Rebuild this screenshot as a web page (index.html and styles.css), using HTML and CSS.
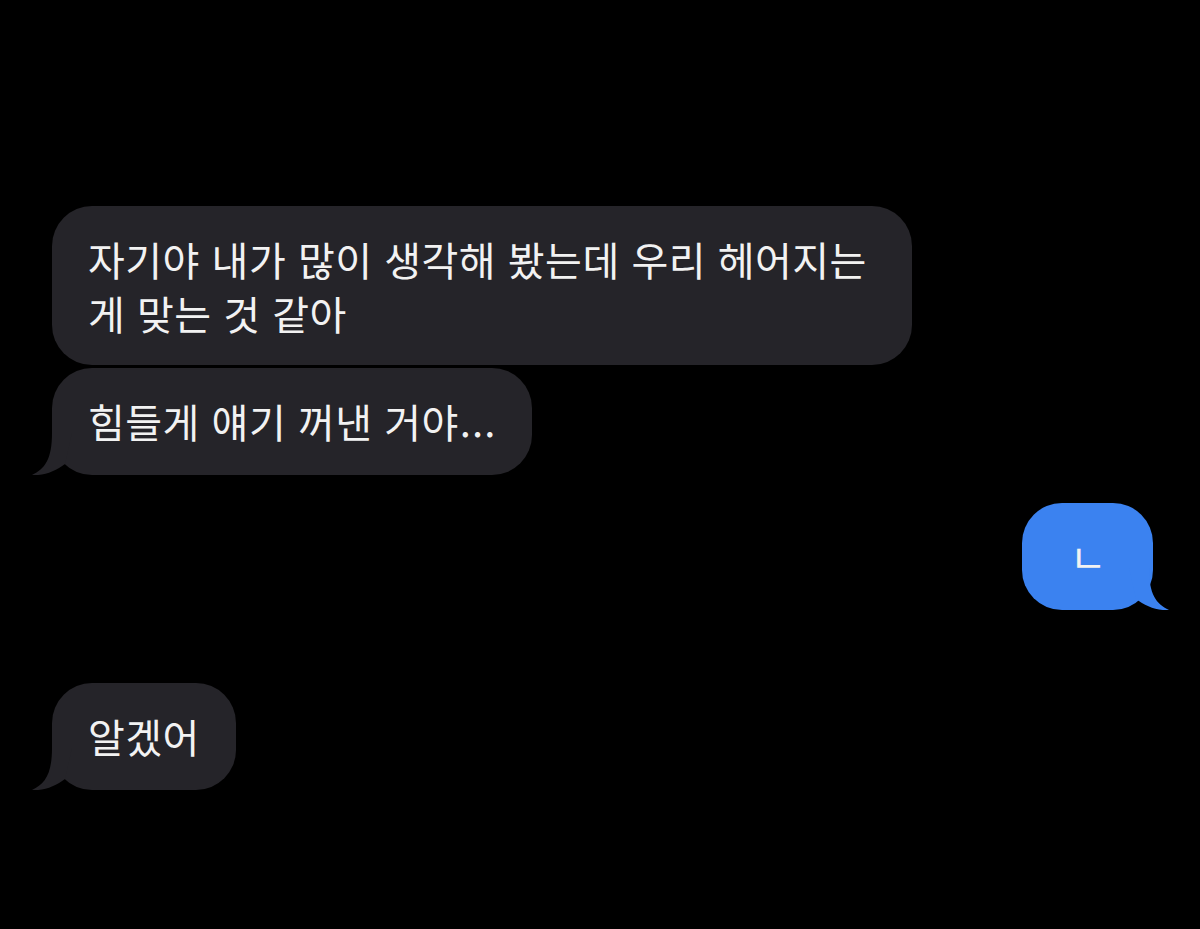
FILE: index.html
```html
<!DOCTYPE html>
<html lang="ko">
<head>
<meta charset="utf-8">
<title>메시지</title>
<link rel="stylesheet" href="styles.css">
</head>
<body>
<main class="thread">
  <div class="bubble in wide">자기야 내가 많이 생각해 봤는데 우리 헤어지는 게 맞는 것 같아</div>
  <div class="bubble in gap-s">힘들게 얘기 꺼낸 거야<span class="dots">...</span><svg class="tail" viewBox="0 0 40 42" width="40" height="42"><path d="M20,0 C20,26 13,36 0,42 C12,43 24,38 33,31 L40,0 Z"/></svg></div>
  <div class="bubble out gap-m">ㄴ<svg class="tail" viewBox="0 0 40 42" width="40" height="42"><path d="M20,0 C20,26 13,36 0,42 C12,43 24,38 33,31 L40,0 Z"/></svg></div>
  <div class="bubble in gap-l">알겠어<svg class="tail" viewBox="0 0 40 42" width="40" height="42"><path d="M20,0 C20,26 13,36 0,42 C12,43 24,38 33,31 L40,0 Z"/></svg></div>
</main>
</body>
</html>
```
FILE: styles.css
```css
html, body {
  margin: 0;
  padding: 0;
  background: #000;
}
body {
  width: 1200px;
  height: 929px;
  overflow: hidden;
  font-family: "Noto Sans CJK KR", "Noto Sans", sans-serif;
}
.thread {
  display: flex;
  flex-direction: column;
  padding: 206px 47px 0 52px;
}
.bubble {
  position: relative;
  box-sizing: border-box;
  width: fit-content;
  max-width: 860px;
  padding: 26px 36px 27px;
  border-radius: 40px;
  font-size: 40px;
  line-height: 54px;
  letter-spacing: 0.5px;
  color: #f2f2f2;
  word-break: keep-all;
  white-space: normal;
}
.dots {
  letter-spacing: 1px;
  margin-left: 1px;
}
.bubble.in {
  align-self: flex-start;
  background: #252429;
}
.bubble.in .tail {
  fill: #252429;
}
.bubble.out {
  align-self: flex-end;
  background: #3b82f0;
  padding: 26px 46px 27px 48px;
}
.bubble.out .tail {
  fill: #3b82f0;
}
.bubble.wide {
  width: 860px;
  padding-bottom: 25px;
}
.tail {
  position: absolute;
  bottom: 0;
  left: -20px;
  display: block;
}
.bubble.out .tail {
  left: auto;
  right: -16px;
  transform: scaleX(-1);
}
.gap-s { margin-top: 3px; }
.gap-m { margin-top: 28px; }
.gap-l { margin-top: 73px; }
```
